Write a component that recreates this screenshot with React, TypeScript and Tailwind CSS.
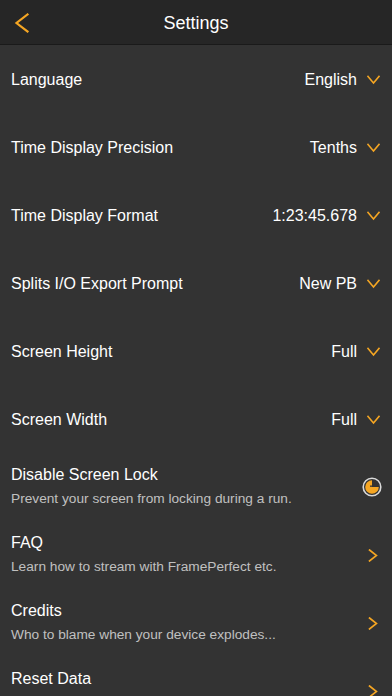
import React from 'react'

const ORANGE = '#f5a623'

const pickers = [
  { label: 'Language', value: 'English' },
  { label: 'Time Display Precision', value: 'Tenths' },
  { label: 'Time Display Format', value: '1:23:45.678' },
  { label: 'Splits I/O Export Prompt', value: 'New PB' },
  { label: 'Screen Height', value: 'Full' },
  { label: 'Screen Width', value: 'Full' },
]

const links = [
  { label: 'FAQ', sub: 'Learn how to stream with FramePerfect etc.' },
  { label: 'Credits', sub: 'Who to blame when your device explodes...' },
  { label: 'Reset Data', sub: '' },
]

function ChevronDown() {
  return (
    <svg width="13" height="10" viewBox="0 0 13 10" fill="none">
      <path d="M1 1.5 L6.5 8 L12 1.5" stroke={ORANGE} strokeWidth="1.6" strokeLinecap="square" />
    </svg>
  )
}

function ChevronRight() {
  return (
    <svg width="10" height="13" viewBox="0 0 10 13" fill="none">
      <path d="M1.5 1 L8.5 6.5 L1.5 12" stroke={ORANGE} strokeWidth="1.6" strokeLinecap="square" />
    </svg>
  )
}

function BackChevron() {
  return (
    <svg width="16" height="20" viewBox="0 0 16 20" fill="none">
      <path d="M13.5 1.5 L2.5 10 L13.5 18.5" stroke={ORANGE} strokeWidth="2.2" strokeLinecap="square" />
    </svg>
  )
}

function LockToggle() {
  return (
    <svg width="20" height="20" viewBox="0 0 20 20" fill="none">
      <circle cx="10" cy="10" r="8.8" stroke="#d9d9d9" strokeWidth="1.6" />
      <path d="M10 10 L10 3.2 A6.8 6.8 0 1 0 16.8 10 Z" fill={ORANGE} />
      <rect x="8.2" y="8.4" width="1.6" height="1.6" fill="#333" />
    </svg>
  )
}

export default function App() {
  return (
    <div
      className="w-[392px] h-[696px] overflow-hidden bg-[#333333] text-white"
      style={{ fontFamily: '"Liberation Sans", Arial, Helvetica, sans-serif' }}
    >
      {/* Nav bar */}
      <div className="relative h-[45px] bg-[#262626] border-b border-[#1a1a1a] flex items-center justify-center">
        <div className="absolute left-[14px] top-[13px]">
          <BackChevron />
        </div>
        <span className="text-[18px] mt-[2px]">Settings</span>
      </div>

      {pickers.map((p) => (
        <div key={p.label} className="h-[68px] flex items-center pl-[11px] pr-[12px] pt-[1px]">
          <span className="flex-1 text-[16px]">{p.label}</span>
          <span className="text-[16px] mr-[10px]">{p.value}</span>
          <ChevronDown />
        </div>
      ))}

      <div className="h-[68px] flex items-center pl-[11px] pr-[10px]">
        <div className="flex-1 flex flex-col gap-[7px] -mt-[1px]">
          <span className="text-[16px] leading-[18px]">Disable Screen Lock</span>
          <span className="text-[13.7px] leading-[16px] text-[#c0c0c0]">Prevent your screen from locking during a run.</span>
        </div>
        <LockToggle />
      </div>

      {links.map((l) => (
        <div key={l.label} className="h-[68px] flex items-center pl-[11px] pr-[14px]">
          <div className="flex-1 flex flex-col gap-[7px] -mt-[1px]">
            <span className="text-[16px] leading-[18px]">{l.label}</span>
            <span className="text-[13.7px] leading-[16px] text-[#c0c0c0] h-[16px]">{l.sub}</span>
          </div>
          <ChevronRight />
        </div>
      ))}
    </div>
  )
}
